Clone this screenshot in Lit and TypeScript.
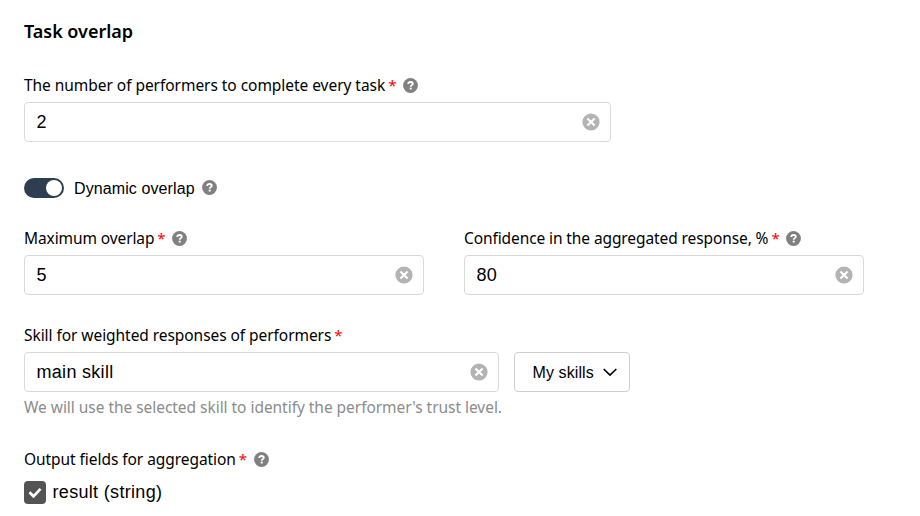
import { LitElement, html, css } from "lit";
import { customElement, property } from "lit/decorators.js";

@customElement("help-icon")
class HelpIcon extends LitElement {
  static styles = css`
    :host { display: block; width: 15px; height: 15px; flex: none; }
    svg { display: block; }
  `;
  render() {
    return html`<svg width="15" height="15" viewBox="0 0 15 15">
      <circle cx="7.5" cy="7.5" r="7.4" fill="#808080" />
      <path d="M5.2 6c0-1.3 1-2 2.3-2s2.3.7 2.3 1.8c0 1.3-2.1 1.4-2.1 2.9" fill="none" stroke="#fff" stroke-width="1.8" />
      <rect x="6.7" y="9.7" width="2" height="1.8" fill="#fff" />
    </svg>`;
  }
}

@customElement("field-label")
class FieldLabel extends LitElement {
  @property({ type: Boolean }) required = false;
  @property({ type: Boolean }) help = false;
  static styles = css`
    :host { display: flex; height: 20px; line-height: 20px; font-family: "Noto Sans", sans-serif; font-size: 15.5px; color: #000; white-space: pre; }
    .star { color: #f00; font-size: 15px; letter-spacing: 0; width: 7px; margin-left: 3px; }
    help-icon { margin: 3px 0 0 8px; }
  `;
  render() {
    return html`<span><slot></slot></span>${this.required ? html`<span class="star">*</span>` : ""}${this.help ? html`<help-icon></help-icon>` : ""}`;
  }
}

@customElement("text-field")
class TextField extends LitElement {
  @property() value = "";
  static styles = css`
    :host { display: flex; box-sizing: border-box; height: 40px; border: 1px solid #d9d9d9; border-radius: 4px; align-items: center; justify-content: space-between; padding: 0 10px 0 11.5px; background: #fff; font: 18px/38px "Liberation Sans", Arial, sans-serif; letter-spacing: 0.3px; color: #000; }
    svg { display: block; flex: none; }
  `;
  render() {
    return html`<span>${this.value}</span>
      <svg width="18" height="18" viewBox="0 0 18 18">
        <circle cx="9" cy="9" r="8.6" fill="#b3b3b3" />
        <path d="M5.4 5.4l7.2 7.2M12.6 5.4l-7.2 7.2" stroke="#fff" stroke-width="2.1" />
      </svg>`;
  }
}

@customElement("app-root")
class AppRoot extends LitElement {
  static styles = css`
    :host { display: block; box-sizing: border-box; width: 920px; height: 516px; padding: 19px 24px 0; background: #fff; overflow: hidden; }
    h1 { margin: 0; font: 600 18px/24px "Noto Sans", sans-serif; letter-spacing: -0.02px; color: #000; }
    .count { margin-top: 32px; width: 587px; }
    .l1 { letter-spacing: -0.045px; }
    .l2 { letter-spacing: -0.1px; }
    .l3 { letter-spacing: -0.1px; }
    .l4 { letter-spacing: -0.06px; }
    .l5 { letter-spacing: -0.06px; }
    text-field { margin-top: 7px; }
    .toggle { display: flex; align-items: center; height: 20px; margin-top: 36px; font: 16px/20px "Liberation Sans", Arial, sans-serif; letter-spacing: 0.1px; }
    .toggle span { padding-top: 1px; }
    .switch { box-sizing: border-box; width: 40px; height: 20px; border-radius: 10px; background: #2e3d50; padding: 2px; display: flex; justify-content: flex-end; margin-right: 10px; }
    .knob { width: 16px; height: 16px; border-radius: 50%; background: #fff; }
    .toggle help-icon { margin: 0 0 1px 7.5px; }
    .pair { display: flex; gap: 40px; margin-top: 30px; }
    .pair > div { width: 400px; }
    .skill { margin-top: 30px; }
    .row { display: flex; gap: 15px; margin-top: 7px; }
    .row text-field { width: 475px; margin: 0; }
    .select { box-sizing: border-box; width: 116px; height: 40px; border: 1px solid #ccc; border-radius: 4px; display: flex; align-items: center; justify-content: space-between; padding: 0 12px 0 17.5px; font: 16px/38px "Liberation Sans", Arial, sans-serif; letter-spacing: 0.1px; color: #000; background: #fff; }
    .select span { padding-top: 1px; }
    .hint { margin-top: 5px; height: 20px; font: 15.5px/20px "Noto Sans", sans-serif; letter-spacing: -0.04px; color: #8c8c8c; white-space: nowrap; }
    .output { margin-top: 32px; }
    .check { display: flex; align-items: center; height: 24px; margin-top: 11px; font: 18px/24px "Liberation Sans", Arial, sans-serif; letter-spacing: 0.32px; }
    .check svg { display: block; margin-right: 6.5px; }
  `;
  render() {
    return html`
      <h1>Task overlap</h1>
      <div class="count">
        <field-label class="l1" required help>The number of performers to complete every task</field-label>
        <text-field value="2"></text-field>
      </div>
      <div class="toggle">
        <div class="switch"><div class="knob"></div></div>
        <span>Dynamic overlap</span><help-icon></help-icon>
      </div>
      <div class="pair">
        <div><field-label class="l2" required help>Maximum overlap</field-label><text-field value="5"></text-field></div>
        <div><field-label class="l3" required help>Confidence in the aggregated response, %</field-label><text-field value="80"></text-field></div>
      </div>
      <div class="skill">
        <field-label class="l4" required>Skill for weighted responses of performers</field-label>
        <div class="row">
          <text-field value="main skill"></text-field>
          <div class="select"><span>My skills</span>
            <svg width="14" height="9" viewBox="0 0 14 9"><path d="M.7 1l6.3 6 6.3-6" fill="none" stroke="#000" stroke-width="1.7" /></svg>
          </div>
        </div>
        <div class="hint">We will use the selected skill to identify the performer's trust level.</div>
      </div>
      <div class="output">
        <field-label class="l5" required help>Output fields for aggregation</field-label>
        <div class="check">
          <svg width="22" height="23" viewBox="0 0 22 23"><rect width="22" height="23" rx="4" fill="#545454" /><path d="M5.5 11.3l4 4 7-7.5" fill="none" stroke="#fff" stroke-width="2.7" /></svg>
          <span>result (string)</span>
        </div>
      </div>
    `;
  }
}
